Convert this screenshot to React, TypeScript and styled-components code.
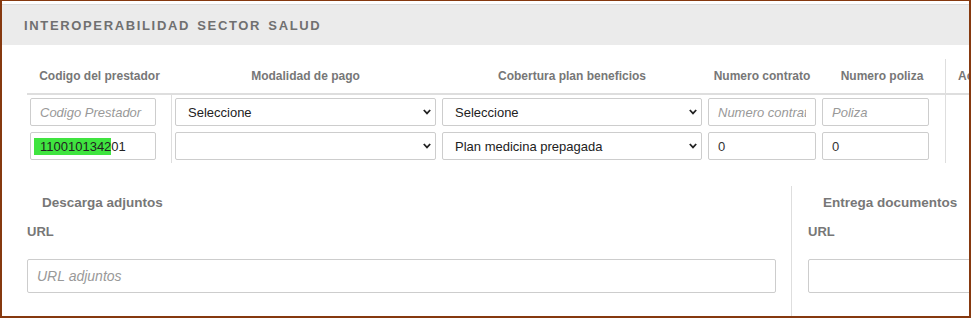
import React from 'react'
import styled, { createGlobalStyle } from 'styled-components'

const GlobalStyle = createGlobalStyle`
  html, body {
    margin: 0;
    padding: 0;
    background: #fff;
  }
  body {
    font-family: 'Liberation Sans', Arial, sans-serif;
  }
`

const Frame = styled.div`
  box-sizing: border-box;
  width: 971px;
  height: 318px;
  border: 2px solid #86390f;
  border-top-width: 1px;
  overflow: hidden;
  background: #fff;
`

const TitleBar = styled.div`
  margin-top: 3px;
  height: 40px;
  border-top: 1px solid #dcdcdc;
  background: #ebebeb;
  display: flex;
  align-items: center;
  padding-left: 22px;
  font-size: 13px;
  font-weight: bold;
  letter-spacing: 1.65px;
  word-spacing: 2px;
  color: #707070;
`

const Grid = styled.div`
  display: grid;
  grid-template-columns: 145px 267px 266px 114px 126px 120px;
  margin: 14px 0 0 25px;
  width: max-content;
`

const HeadCell = styled.div<{ $last?: boolean }>`
  height: 34px;
  display: flex;
  align-items: center;
  justify-content: ${(p) => (p.$last ? 'flex-start' : 'center')};
  padding-left: ${(p) => (p.$last ? '12px' : '0')};
  border-bottom: 2px solid #dedede;
  border-left: ${(p) => (p.$last ? '1px solid #dedede' : 'none')};
  font-size: 12px;
  font-weight: bold;
  color: #777;
  white-space: nowrap;
`

const Cell = styled.div<{ $divider?: 'right' | 'left' }>`
  padding: 3px 0 3px 3px;
  border-right: ${(p) => (p.$divider === 'right' ? '1px solid #dedede' : 'none')};
  border-left: ${(p) => (p.$divider === 'left' ? '1px solid #dedede' : 'none')};
`

const TextInput = styled.input<{ $w: number }>`
  box-sizing: border-box;
  display: block;
  width: ${(p) => p.$w}px;
  height: 28px;
  padding: 0 9px;
  border: 1px solid #cdcdcd;
  border-radius: 2px;
  font-family: 'Liberation Sans', Arial, sans-serif;
  font-size: 13px;
  color: #333;
  background: #fff;
  outline: none;

  &::placeholder {
    color: #999;
    font-style: italic;
  }
`

const ValueBox = styled.div<{ $w: number }>`
  box-sizing: border-box;
  width: ${(p) => p.$w}px;
  height: 28px;
  padding: 0 9px;
  display: flex;
  align-items: center;
  border: 1px solid #cdcdcd;
  border-radius: 2px;
  font-size: 13px;
  color: #222;
  white-space: nowrap;
`

const Highlight = styled.span`
  background: #3fe43f;
  margin-left: -6px;
  padding: 1px 0 1px 6px;
`

const SelectWrap = styled.div<{ $w: number }>`
  position: relative;
  width: ${(p) => p.$w}px;
  height: 28px;
`

const Select = styled.select`
  box-sizing: border-box;
  appearance: none;
  width: 100%;
  height: 100%;
  padding: 0 24px 0 12px;
  border: 1px solid #cdcdcd;
  border-radius: 2px;
  background: #fff;
  font-family: 'Liberation Sans', Arial, sans-serif;
  font-size: 13px;
  color: #222;
  outline: none;
`

const Chevron = styled.svg`
  position: absolute;
  right: 5px;
  top: 11px;
  pointer-events: none;
`

const Lower = styled.div`
  display: flex;
  margin-top: 23px;
  height: 140px;
`

const Panel = styled.div<{ $w?: number; $first?: boolean }>`
  box-sizing: border-box;
  flex: ${(p) => (p.$w ? `0 0 ${p.$w}px` : '1 0 auto')};
  padding: ${(p) => (p.$first ? '8px 15px 0 25px' : '8px 0 0 16px')};
  border-left: ${(p) => (p.$first ? 'none' : '1px solid #dedede')};
`

const PanelTitle = styled.div`
  padding-left: 15px;
  font-size: 13.5px;
  line-height: 17px;
  font-weight: bold;
  color: #777;
  white-space: nowrap;
`

const FieldLabel = styled.div`
  margin-top: 12px;
  font-size: 13px;
  line-height: 17px;
  font-weight: bold;
  color: #777;
`

const WideInput = styled.input<{ $w: number }>`
  box-sizing: border-box;
  display: block;
  margin-top: 19px;
  width: ${(p) => p.$w}px;
  height: 34px;
  padding: 0 9px;
  border: 1px solid #cdcdcd;
  border-radius: 2px;
  font-family: 'Liberation Sans', Arial, sans-serif;
  font-size: 14px;
  color: #333;
  outline: none;

  &::placeholder {
    color: #999;
    font-style: italic;
  }
`

const ChevronIcon = () => (
  <Chevron width="8" height="6" viewBox="0 0 8 6">
    <path d="M0.8 1 L4 4.4 L7.2 1" fill="none" stroke="#222" strokeWidth="1.8" />
  </Chevron>
)

const SelectBox: React.FC<{ w: number; value: string }> = ({ w, value }) => (
  <SelectWrap $w={w}>
    <Select defaultValue={value}>
      <option value={value}>{value}</option>
    </Select>
    <ChevronIcon />
  </SelectWrap>
)

const headers = [
  'Codigo del prestador',
  'Modalidad de pago',
  'Cobertura plan beneficios',
  'Numero contrato',
  'Numero poliza',
]

export default function App() {
  return (
    <>
      <GlobalStyle />
      <Frame>
        <TitleBar>INTEROPERABILIDAD SECTOR SALUD</TitleBar>

        <Grid>
          {headers.map((h) => (
            <HeadCell key={h}>{h}</HeadCell>
          ))}
          <HeadCell $last>Acciones</HeadCell>

          <Cell $divider="right">
            <TextInput $w={126} placeholder="Codigo Prestador" />
          </Cell>
          <Cell>
            <SelectBox w={261} value="Seleccione" />
          </Cell>
          <Cell>
            <SelectBox w={260} value="Seleccione" />
          </Cell>
          <Cell>
            <TextInput $w={108} placeholder="Numero contrato" />
          </Cell>
          <Cell>
            <TextInput $w={107} placeholder="Poliza" />
          </Cell>
          <Cell $divider="left" />

          <Cell $divider="right">
            <ValueBox $w={126}>
              <Highlight>1100101342</Highlight>01
            </ValueBox>
          </Cell>
          <Cell>
            <SelectBox w={261} value="" />
          </Cell>
          <Cell>
            <SelectBox w={260} value="Plan medicina prepagada" />
          </Cell>
          <Cell>
            <TextInput $w={108} defaultValue="0" />
          </Cell>
          <Cell>
            <TextInput $w={107} defaultValue="0" />
          </Cell>
          <Cell $divider="left" />
        </Grid>

        <Lower>
          <Panel $first $w={789}>
            <PanelTitle>Descarga adjuntos</PanelTitle>
            <FieldLabel>URL</FieldLabel>
            <WideInput $w={749} placeholder="URL adjuntos" />
          </Panel>
          <Panel>
            <PanelTitle>Entrega documentos</PanelTitle>
            <FieldLabel>URL</FieldLabel>
            <WideInput $w={400} />
          </Panel>
        </Lower>
      </Frame>
    </>
  )
}
